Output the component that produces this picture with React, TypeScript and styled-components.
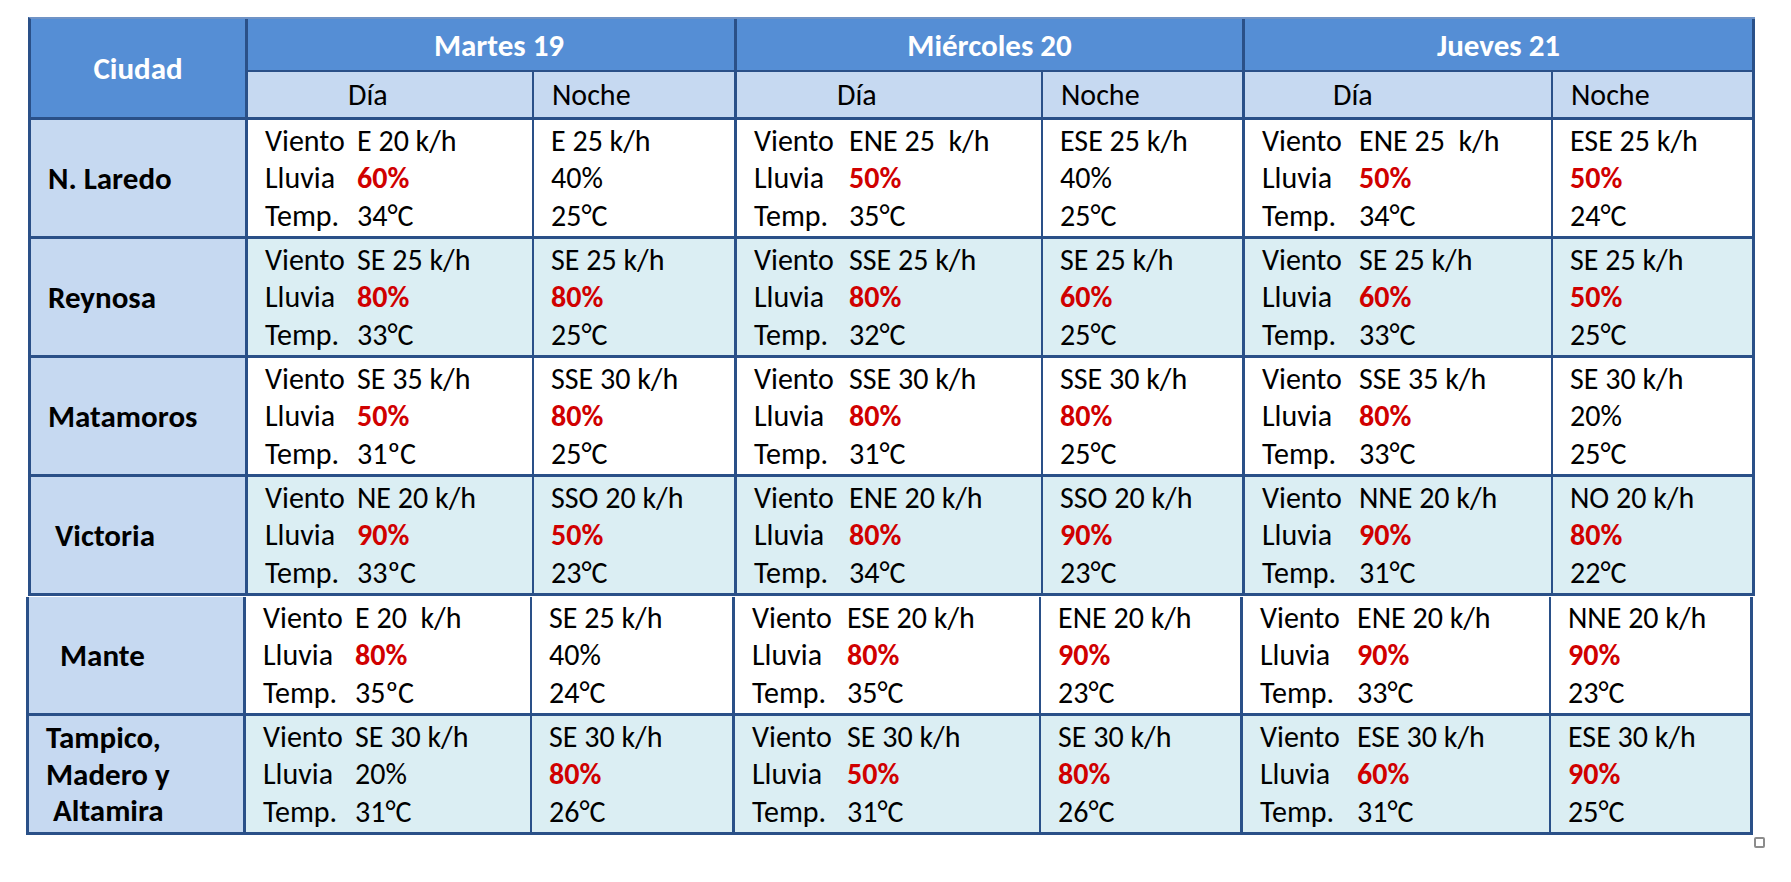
import { FC } from "react";
import styled, { createGlobalStyle } from "styled-components";

type Reading = { wind: string; rain: string; hot: boolean; temp: string };
type CityRow = { name: string[]; slots: Reading[] };

const r = (wind: string, rain: string, temp: string, hot = true): Reading => ({
  wind,
  rain,
  hot,
  temp,
});

const days = [
  { title: "Martes 19", label: 92, indent: 100, nudge: 16 },
  { title: "Miércoles 20", label: 95, indent: 100, nudge: 0 },
  { title: "Jueves 21", label: 97, indent: 88, nudge: 0 },
];

// slots: día / noche for each of the three days
const cities: CityRow[] = [
  {
    name: ["N. Laredo"],
    slots: [
      r("E 20 k/h", "60%", "34°C"),
      r("E 25 k/h", "40%", "25°C", false),
      r("ENE 25  k/h", "50%", "35°C"),
      r("ESE 25 k/h", "40%", "25°C", false),
      r("ENE 25  k/h", "50%", "34°C"),
      r("ESE 25 k/h", "50%", "24°C"),
    ],
  },
  {
    name: ["Reynosa"],
    slots: [
      r("SE 25 k/h", "80%", "33°C"),
      r("SE 25 k/h", "80%", "25°C"),
      r("SSE 25 k/h", "80%", "32°C"),
      r("SE 25 k/h", "60%", "25°C"),
      r("SE 25 k/h", "60%", "33°C"),
      r("SE 25 k/h", "50%", "25°C"),
    ],
  },
  {
    name: ["Matamoros"],
    slots: [
      r("SE 35 k/h", "50%", "31ºC"),
      r("SSE 30 k/h", "80%", "25°C"),
      r("SSE 30 k/h", "80%", "31°C"),
      r("SSE 30 k/h", "80%", "25°C"),
      r("SSE 35 k/h", "80%", "33°C"),
      r("SE 30 k/h", "20%", "25°C", false),
    ],
  },
  {
    name: [" Victoria"],
    slots: [
      r("NE 20 k/h", "90%", "33ºC"),
      r("SSO 20 k/h", "50%", "23°C"),
      r("ENE 20 k/h", "80%", "34°C"),
      r("SSO 20 k/h", "90%", "23°C"),
      r("NNE 20 k/h", "90%", "31°C"),
      r("NO 20 k/h", "80%", "22°C"),
    ],
  },
  {
    name: ["  Mante"],
    slots: [
      r("E 20  k/h", "80%", "35ºC"),
      r("SE 25 k/h", "40%", "24°C", false),
      r("ESE 20 k/h", "80%", "35°C"),
      r("ENE 20 k/h", "90%", "23°C"),
      r("ENE 20 k/h", "90%", "33°C"),
      r("NNE 20 k/h", "90%", "23°C"),
    ],
  },
  {
    name: ["Tampico,", "Madero y", " Altamira"],
    slots: [
      r("SE 30 k/h", "20%", "31°C", false),
      r("SE 30 k/h", "80%", "26°C"),
      r("SE 30 k/h", "50%", "31°C"),
      r("SE 30 k/h", "80%", "26°C"),
      r("ESE 30 k/h", "60%", "31°C"),
      r("ESE 30 k/h", "90%", "25°C"),
    ],
  },
];

const GlobalStyle = createGlobalStyle`
  body {
    margin: 0;
    background: #ffffff;
    font-family: Carlito, Lato, "Liberation Sans", sans-serif;
    color: #000000;
  }
`;

const Page = styled.div`
  padding: 17px 0 0 28px;
`;

const Grid = styled.div<{ $top?: boolean; $shift?: number }>`
  display: grid;
  grid-template-columns: 217px 286px 203px 306px 202px 308px 202px;
  grid-auto-rows: 119px;
  border-left: 3px solid #2a5088;
  border-top: ${({ $top }) => ($top ? "2px solid #6f93c6" : "none")};
  margin-left: ${({ $shift }) => $shift ?? 0}px;
  margin-top: ${({ $top }) => ($top ? 0 : 1)}px;
  width: max-content;
`;

const Cell = styled.div<{ $minor?: boolean }>`
  box-sizing: border-box;
  border-right: ${({ $minor }) => ($minor ? "2px" : "3px")} solid #2a5088;
  border-bottom: 3px solid #2a5088;
`;

const CityHead = styled(Cell)`
  grid-row: span 2;
  height: 101px;
  background: #558ed5;
  color: #ffffff;
  font-weight: 700;
  font-size: 31px;
  display: flex;
  align-items: center;
  justify-content: center;
`;

const DayHead = styled(Cell)<{ $nudge: number }>`
  grid-column: span 2;
  height: 53px;
  border-bottom-width: 2px;
  background: #558ed5;
  color: #ffffff;
  font-weight: 700;
  font-size: 31px;
  display: flex;
  align-items: center;
  justify-content: center;
  padding-left: ${({ $nudge }) => $nudge}px;
`;

const SubHead = styled(Cell)<{ $indent: number }>`
  height: 48px;
  background: #c6d9f1;
  font-size: 30px;
  display: flex;
  align-items: center;
  padding-left: ${({ $indent }) => $indent}px;
`;

const CityCell = styled(Cell)`
  background: #c6d9f1;
  font-weight: 700;
  font-size: 31px;
  line-height: 36.5px;
  white-space: pre;
  padding-left: 17px;
  display: flex;
  flex-direction: column;
  justify-content: center;
`;

const DataCell = styled(Cell)<{ $shade: boolean }>`
  background: ${({ $shade }) => ($shade ? "#dbeef3" : "#ffffff")};
  font-size: 30px;
  padding-left: 17px;
  display: flex;
  align-items: center;
`;

const DayLines = styled.div<{ $label: number }>`
  display: grid;
  grid-template-columns: ${({ $label }) => $label}px auto;
  line-height: 37.5px;
  white-space: pre;
`;

const NightLines = styled.div`
  display: flex;
  flex-direction: column;
  line-height: 37.5px;
  white-space: pre;
`;

const Rain = styled.span<{ $hot: boolean }>`
  color: ${({ $hot }) => ($hot ? "#d00000" : "inherit")};
  font-weight: ${({ $hot }) => ($hot ? 700 : 400)};
`;

const HandleRow = styled.div`
  display: flex;
  justify-content: flex-end;
  width: 1737px;
  margin-top: 2px;
`;

const Handle = styled.div`
  width: 11px;
  height: 11px;
  box-sizing: border-box;
  border: 2px solid #8c8c8c;
  border-radius: 2px;
  background: #ffffff;
`;

const Row: FC<{ city: CityRow; shade: boolean }> = ({ city, shade }) => (
  <>
    <CityCell>
      {city.name.map((n) => (
        <span key={n}>{n}</span>
      ))}
    </CityCell>
    {city.slots.map((s, i) => {
      const isDay = i % 2 === 0;
      return (
        <DataCell key={i} $shade={shade} $minor={isDay}>
          {isDay ? (
            <DayLines $label={days[i / 2].label}>
              <span>Viento</span>
              <span>{s.wind}</span>
              <span>Lluvia</span>
              <Rain $hot={s.hot}>{s.rain}</Rain>
              <span>Temp.</span>
              <span>{s.temp}</span>
            </DayLines>
          ) : (
            <NightLines>
              <span>{s.wind}</span>
              <Rain $hot={s.hot}>{s.rain}</Rain>
              <span>{s.temp}</span>
            </NightLines>
          )}
        </DataCell>
      );
    })}
  </>
);

const App: FC = (): JSX.Element => {
  return (
    <Page>
      <GlobalStyle />
      <Grid $top style={{ gridTemplateRows: "53px 48px" }}>
        <CityHead>Ciudad</CityHead>
        {days.map((d) => (
          <DayHead key={d.title} $nudge={d.nudge}>
            {d.title}
          </DayHead>
        ))}
        {days.map((d) => [
          <SubHead key={d.title + "d"} $minor $indent={d.indent}>
            Día
          </SubHead>,
          <SubHead key={d.title + "n"} $indent={18}>
            Noche
          </SubHead>,
        ])}
        {cities.slice(0, 4).map((c, i) => (
          <Row key={c.name[0]} city={c} shade={i % 2 === 1} />
        ))}
      </Grid>
      <Grid $shift={-2}>
        {cities.slice(4).map((c, i) => (
          <Row key={c.name[0]} city={c} shade={i % 2 === 1} />
        ))}
      </Grid>
      <HandleRow>
        <Handle />
      </HandleRow>
    </Page>
  );
};

export default App;
